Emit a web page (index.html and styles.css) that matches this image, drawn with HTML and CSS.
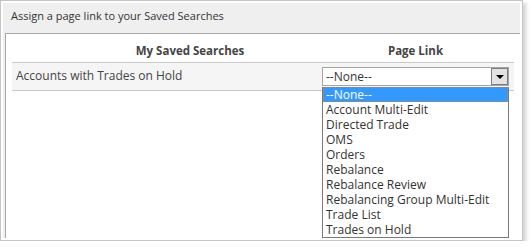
FILE: index.html
```html
<!DOCTYPE html>
<html lang="en">
<head>
  <meta charset="UTF-8" />
  <title>Saved Search Page Links</title>
  <link rel="stylesheet" href="styles.css">
</head>
<body>
  <div class="frame">
    <div class="frame-title">Assign a page link to your Saved Searches</div>
    <div class="panel">
      <div class="links-table">
        <div class="col-head col-name">My Saved Searches</div>
        <div class="col-head col-link">Page Link</div>

        <div class="cell cell-name">Accounts with Trades on Hold</div>
        <div class="cell cell-link">
          <div class="fake-select">
            <span class="fake-select-value">--None--</span>
            <span class="fake-select-btn"><span class="arrow"></span></span>
          </div>
        </div>
      </div>

      <!-- open list of the select -->
      <ul class="option-list">
        <li class="selected">--None--</li>
        <li>Account Multi-Edit</li>
        <li>Directed Trade</li>
        <li>OMS</li>
        <li>Orders</li>
        <li>Rebalance</li>
        <li>Rebalance Review</li>
        <li>Rebalancing Group Multi-Edit</li>
        <li>Trade List</li>
        <li>Trades on Hold</li>
      </ul>
    </div>
  </div>
</body>
</html>
```

FILE: styles.css
```css
body {
  margin: 0;
  background: #fff;
  font-family: 'Open Sans', 'Noto Sans', sans-serif;
  color: #333;
}

.frame {
  width: 517px;
  height: 235px;
  border: 1px solid #c4c4c4;
  padding: 2px;
  background: #fff;
  box-shadow: 3px 3px 4px rgba(0, 0, 0, 0.18);
  display: flex;
  flex-direction: column;
}

.frame-title {
  height: 30px;
  box-sizing: border-box;
  padding: 5px 0 0 8px;
  background: #efefef;
  font-size: 11px;
  color: #333;
}

.panel {
  flex: 1;
  position: relative;
  overflow: hidden;
  background: #fff;
  border-top: 1px solid #a9a9a9;
  border-left: 1px solid #a9a9a9;
  margin-left: 2px;
  padding: 6px 5px 0 6px;
  box-shadow: -2px 0 0 #efefef;
}

.links-table {
  display: grid;
  grid-template-columns: 306px 196px;
}

.col-head {
  height: 23px;
  box-sizing: border-box;
  padding-top: 3px;
  border-bottom: 1px solid #c9c9c9;
  font-weight: bold;
  font-size: 11.5px;
  color: #444;
}

.col-name {
  padding-left: 50px;
  text-align: center;
}

.col-link {
  padding-left: 4px;
  padding-right: 5px;
  text-align: center;
}

.cell {
  height: 28px;
  box-sizing: border-box;
  background: #f5f5f5;
  border-bottom: 1px solid #c9c9c9;
}

.cell-name {
  padding: 4px 0 0 4px;
  font-size: 12px;
  color: #444;
}

.cell-link {
  padding: 4px 5px 0 4px;
}

.fake-select {
  height: 19px;
  box-sizing: border-box;
  border: 1px solid #a5a5a5;
  background: #fff;
  display: flex;
  align-items: center;
}

.fake-select-value {
  flex: 1;
  padding-left: 3px;
  font-size: 12px;
  line-height: 17px;
}

.fake-select-btn {
  width: 17px;
  height: 17px;
  box-sizing: border-box;
  border: 1px solid #7d7d7d;
  background: #e3e3e3;
  display: flex;
  align-items: center;
  justify-content: center;
}

.arrow {
  width: 0;
  height: 0;
  border-left: 4px solid transparent;
  border-right: 4px solid transparent;
  border-top: 4px solid #000;
}

.option-list {
  position: absolute;
  left: 316px;
  top: 53px;
  width: 187px;
  box-sizing: border-box;
  margin: 0;
  padding: 0;
  list-style: none;
  background: #fff;
  border: 1px solid #7a7a7a;
  border-top: none;
  font-size: 12px;
  color: #333;
}

.option-list li {
  height: 15px;
  line-height: 15px;
  padding-left: 3px;
  white-space: nowrap;
}

.option-list .selected {
  background: #3399ff;
  color: #fff;
  outline: 1px dotted #c08040;
  outline-offset: -1px;
}
```
